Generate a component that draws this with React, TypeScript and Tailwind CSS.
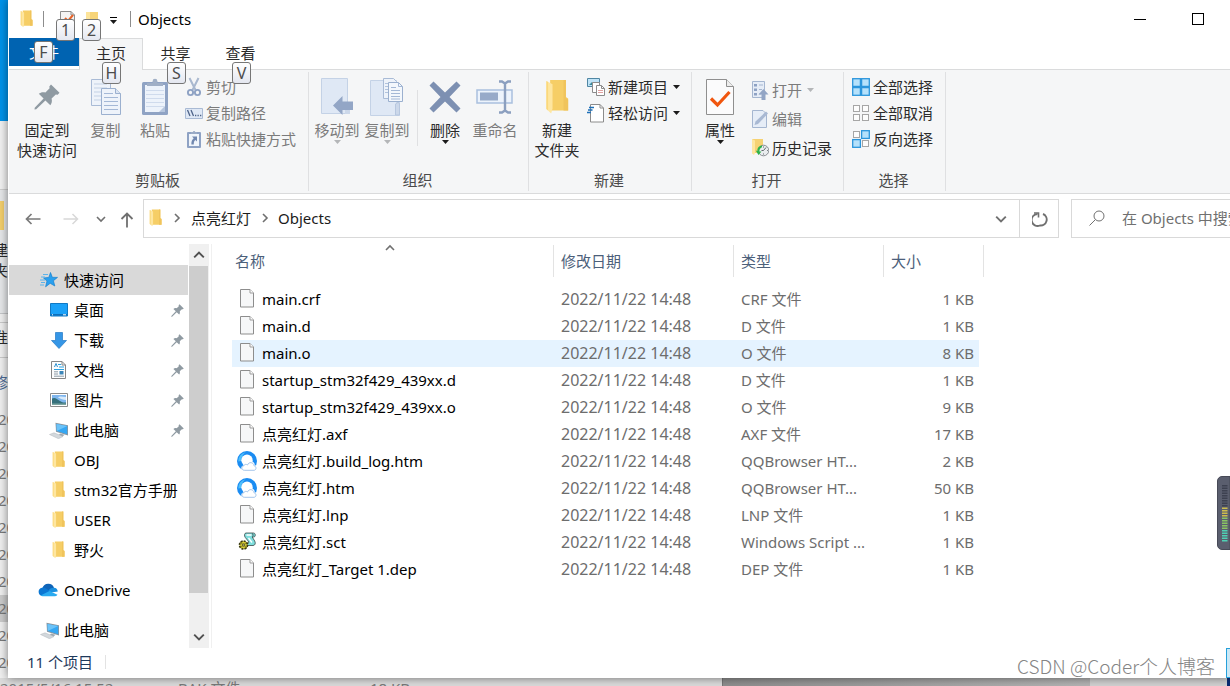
import React from "react";

type IconProps = { className?: string };

function Folder({ className = "h-[18px] w-[13px]" }: IconProps) {
  return (
    <svg viewBox="0 0 14 18" className={className} preserveAspectRatio="none" aria-hidden="true">
      <path d="M3 0.5h9.2v8.5l1.3.8v6H3z" fill="#f6ce66" />
      <path d="M10.8.5h1.4v9l1.3.8v5.5h-2.7z" fill="#f0c45c" />
      <path d="M.8 1l3.6 1.600v12.200l-.8 2.400L.8 15z" fill="#fee6a0" />
      <path d="M.8 1L0.8 15l1 .8V1.500z" fill="#fbd87c" />
    </svg>
  );
}

function FileIcon({ className = "h-[19px] w-[16px]" }: IconProps) {
  return (
    <svg viewBox="0 0 16 19" className={className} aria-hidden="true">
      <path d="M1.500.5h9.500l3.500 3.500v14h-13z" fill="#f6f7f8" stroke="#8d8d8d" />
      <path d="M11 .5v3.500h3.500" fill="#fff" stroke="#9b9b9b" />
    </svg>
  );
}

function Pin({ className = "h-[13px] w-[13px]" }: IconProps) {
  return (
    <svg viewBox="0 0 26 26" className={className} aria-hidden="true">
      <path
        d="M17 0.500l8.500 8.300-1.800 1.900-1.900-.3-4.200 4.200c.7 2.700.2 5-1.300 6.600l-4.900-4.800L2.200 25.300l-1.700.2.200-1.700 8.900-9.200-4.800-4.800c1.700-1.500 4-2 6.600-1.300l4.200-4.200-.3-1.900z"
        fill="#8f9aa2"
      />
    </svg>
  );
}

function CopyPages({ className = "h-10 w-10" }: IconProps) {
  return (
    <svg viewBox="0 0 32 38" className={className} aria-hidden="true">
      <path d="M1.500 1.500h19v26h-19z" fill="#eef3fa" stroke="#a9bbd6" />
      <path d="M4 6h13M4 10h13M4 14h8M4 18h8M4 22h8" stroke="#c3d1e5" />
      <path d="M11.500 10.500h14l5 5v21h-19z" fill="#eef3fa" stroke="#9bb0cf" />
      <path d="M25.500 10.500v5h5" fill="#dbe5f3" stroke="#9bb0cf" />
      <path d="M14 15.500h9M14 19.500h14M14 23.500h14M14 27.500h14M14 31.500h14" stroke="#a4b8d6" />
    </svg>
  );
}

function Clipboard({ className = "h-10 w-8" }: IconProps) {
  return (
    <svg viewBox="0 0 28 38" className={className} aria-hidden="true">
      <rect x="1" y="4" width="26" height="33" rx="1.500" fill="#8fa3c4" />
      <path d="M4 7h20v27H4z" fill="#edf3fb" />
      <path d="M5 12.500h18M5 16.500h18M5 20.500h18M5 24.500h18M5 28.500h18" stroke="#cfdbed" />
      <path d="M18 34l6-6v6z" fill="#b6c6de" />
      <path d="M6 8V5h5.500a2.600 2.600 0 015 0H22v3z" fill="#a0afc6" />
      <circle cx="14" cy="3.200" r="2.400" fill="#a0afc6" />
    </svg>
  );
}

function Scissors() {
  return (
    <svg viewBox="0 0 18 20" className="h-5 w-[18px]" aria-hidden="true">
      <path d="M4.500 1l6 12M13.500 1l-6 12" stroke="#a9b8cf" strokeWidth="2" fill="none" />
      <circle cx="5.500" cy="15.500" r="2.600" fill="none" stroke="#8ea2c4" strokeWidth="1.900" />
      <circle cx="12.500" cy="15.500" r="2.600" fill="none" stroke="#8ea2c4" strokeWidth="1.900" />
    </svg>
  );
}

function PathIcon() {
  return (
    <svg viewBox="0 0 18 18" className="h-[18px] w-[18px]" aria-hidden="true">
      <path d="M.5 4.500h17v10H.5z" fill="#dfe8f5" stroke="#a9bad4" />
      <path d="M2.500 6l2.500 6M6 6l2.500 6" stroke="#4f6489" strokeWidth="1.300" />
      <path d="M10 11.500h1.300M12.500 11.500h1.300M15 11.500h1.300" stroke="#4f6489" strokeWidth="1.500" />
    </svg>
  );
}

function PasteShortcut() {
  return (
    <svg viewBox="0 0 18 18" className="h-[18px] w-[18px]" aria-hidden="true">
      <rect x="2" y="2" width="14" height="16" rx="1" fill="#8ea2c4" />
      <path d="M4 4h10v12H4z" fill="#f0f5fb" />
      <path d="M6 4V2h1.800a1.300 1.300 0 012.500 0H12v2z" fill="#9aabc6" />
      <path d="M7 6.500h5v5l-1.600-1.600c-1.300 1-1.700 2.200-1.600 4.600H6.400c-.2-3 .6-4.800 2.300-6.200z" fill="#7188b0" />
    </svg>
  );
}

function MoveTo() {
  return (
    <svg viewBox="0 0 34 38" className="h-[38px] w-[34px]" aria-hidden="true">
      <path d="M1.500.5h26v24h2v11h-28z" fill="#dfe8f5" stroke="#c4d2e6" />
      <path d="M25 25h5v11h-5z" fill="#ccd8ea" />
      <path d="M13 27.500L22.500 18v5.500H33v8.500H22.500V37z" fill="#93a6c6" />
    </svg>
  );
}

function CopyTo() {
  return (
    <svg viewBox="0 0 34 40" className="h-10 w-[34px]" aria-hidden="true">
      <path d="M.5 3.500h26v22h3v13H.5z" fill="#dfe8f5" stroke="#c4d2e6" />
      <path d="M25.500 27l3-2 1 2v11h-4z" fill="#ccd8ea" stroke="#b7c7df" />
      <path d="M13.500 1.500h10l3 3v17h-13z" fill="#eef3fa" stroke="#a9bbd6" />
      <path d="M15 6.500h5M15 9.500h4M15 12.500h4M15 15.500h4" stroke="#b1c3dd" />
      <path d="M18.500 5.500h10l4 4v15h-14z" fill="#f3f7fc" stroke="#9bb0cf" />
      <path d="M28.500 5.500v4h4M21 10.500h5M21 13.500h9M21 16.500h9M21 19.500h9M21 22h9" stroke="#a4b8d6" fill="none" />
    </svg>
  );
}

function DeleteX() {
  return (
    <svg viewBox="0 0 34 34" className="h-[34px] w-[34px]" aria-hidden="true">
      <path d="M1.500 5.500l4-4L17 12.500 28.500 1.500l4 4L21.500 17l11 11.500-4 4L17 21.500 5.500 32.500l-4-4L12.500 17z" fill="#7d90b2" />
    </svg>
  );
}

function Rename() {
  return (
    <svg viewBox="0 0 38 36" className="h-9 w-[38px]" aria-hidden="true">
      <path d="M1 11h35v13H1z" fill="#ecf3fc" stroke="#a9c0de" strokeWidth="1.500" />
      <path d="M4 13.500h18v8H4z" fill="#97aac9" />
      <path d="M23 2.500h3l3 2 3-2h3M23 33.500h3l3-2 3 2h3M29 4v28" fill="none" stroke="#8b9fbf" strokeWidth="2.400" />
    </svg>
  );
}

function NewItem() {
  return (
    <svg viewBox="0 0 18 18" className="h-[18px] w-[18px]" aria-hidden="true">
      <path d="M.5.5h12v8H.5z" fill="#bfe3f7" stroke="#4f86a3" />
      <path d="M2 7l3-3 3 3z" fill="#3a8a9a" />
      <path d="M5.500 4.500h7v10h-7z" fill="#fff" stroke="#8c8c8c" />
      <path d="M9.500 7.500h5l3 3v7h-8z" fill="#fff" stroke="#8c8c8c" />
      <path d="M11 12.500h5M11 14.500h5" stroke="#e0a0a0" />
      <path d="M14.500 7.500v3h3" fill="none" stroke="#8c8c8c" />
    </svg>
  );
}

function EasyAccess() {
  return (
    <svg viewBox="0 0 18 19" className="h-[19px] w-[18px]" aria-hidden="true">
      <path d="M3.500.5h9.500l3.500 3.500v14h-13z" fill="#fff" stroke="#8c8c8c" />
      <path d="M13 .5v3.500h3.500" fill="none" stroke="#8c8c8c" />
      <path d="M2 3.500h5M1 6h4.500M0 8.500h4" stroke="#1d6fb8" strokeWidth="1.300" />
    </svg>
  );
}

function Properties() {
  return (
    <svg viewBox="0 0 30 38" className="h-[38px] w-[30px]" aria-hidden="true">
      <path d="M1.500 1.500h20l7 7v28h-27z" fill="#fbfbfc" stroke="#8f8f8f" />
      <path d="M21.500 1.500v7h7" fill="#ededed" stroke="#8f8f8f" />
      <path d="M6 20.500l6.500 6.500L24.500 14" fill="none" stroke="#f0560f" strokeWidth="3.200" />
    </svg>
  );
}

function OpenIcon() {
  return (
    <svg viewBox="0 0 18 20" className="h-5 w-[18px]" aria-hidden="true">
      <path d="M1.500 1.500h12v16h-12z" fill="#e6edf7" stroke="#a5b6d0" />
      <path d="M3 4h3v2.500H3zM3 8.500h3V11H3zM3 13h3v2.500H3z" fill="#8ea2c4" />
      <path d="M8 5h4M8 9.500h3M8 14h2" stroke="#a5b6d0" />
      <path d="M12.500 9l5 5.500h-3V20h-4v-5.500h-3z" fill="#92a5c5" />
    </svg>
  );
}

function EditIcon() {
  return (
    <svg viewBox="0 0 18 18" className="h-[18px] w-[18px]" aria-hidden="true">
      <path d="M1.500.5h10.500l3.500 3.500v13.500h-14z" fill="#e6edf7" stroke="#a5b6d0" />
      <path d="M3.500 15l1-3.500L15 1.500l2 2L7 14z" fill="#a9b9d3" />
    </svg>
  );
}

function HistoryIcon() {
  return (
    <svg viewBox="0 0 18 19" className="h-[19px] w-[18px]" aria-hidden="true">
      <path d="M1 1h11v14H1z" fill="#f6d273" />
      <path d="M1 1l3 1.500V15l-1 2-2-1.500z" fill="#fee6a0" />
      <circle cx="12.500" cy="12.500" r="5.300" fill="#e9ecee" stroke="#8a8f94" />
      <path d="M12.500 12.500l2.500-3M12.500 12.500h-2M12.500 8.500v1M12.500 15.500v1M16 12.500h.8" stroke="#5f666c" />
      <path d="M11 7.500c-3.500.5-5 3-4.500 5.500l-1.800-.4L7.500 17l3-3.500-2 .1c-.2-2 .5-3.600 2.500-4.300z" fill="#2fb34a" />
    </svg>
  );
}

function SelectTiles({ on }: { on: [boolean, boolean, boolean, boolean] }) {
  const spots = [
    [0.7, 0.7],
    [9.6, 0.7],
    [0.7, 9.6],
    [9.6, 9.6],
  ];
  return (
    <svg viewBox="0 0 18 18" className="h-[18px] w-[18px]" aria-hidden="true">
      {spots.map(([x, y], i) =>
        on[i] ? (
          <rect key={i} x={x} y={y} width="7.700" height="7.700" fill="#b5e1fb" stroke="#2b95dc" strokeWidth="1.300" />
        ) : (
          <rect key={i} x={Math.round(x) + 0.5} y={Math.round(y) + 0.5} width="6" height="6" fill="#fdfdfd" stroke="#a6a6a6" />
        )
      )}
    </svg>
  );
}

function StarIcon() {
  return (
    <svg viewBox="0 0 18 16" className="h-4 w-[18px]" aria-hidden="true">
      <path d="M10.500.5l1.800 4.800 5.200.1-4.100 3.300 1.400 5.300-4.600-2.700-4.600 3.500 1.400-5.700L3.500 6l5.300-.6z" fill="#2aa0ee" stroke="#1580cf" strokeWidth=".7" />
      <path d="M3 2.500h5M1 5h4M0 8h5M1 10.500h4M0 13h4" stroke="#5bb4ec" />
    </svg>
  );
}

function DesktopIcon() {
  return (
    <svg viewBox="0 0 18 14" className="h-3.5 w-[18px]" aria-hidden="true">
      <path d="M.5.5h17v12.500H.5z" fill="#1ba1f8" stroke="#1179c4" />
      <path d="M1 11h16v1.600H1z" fill="#0f6fba" />
      <path d="M2 11.800h1M13 11.800h3" stroke="#fff" />
    </svg>
  );
}

function DownloadIcon() {
  return (
    <svg viewBox="0 0 16 17" className="h-[17px] w-4" aria-hidden="true">
      <path d="M4.500.5h7v8h4L8 16.500.5 8.500h4z" fill="#3596e6" stroke="#2379c6" strokeWidth=".7" />
    </svg>
  );
}

function DocumentIcon() {
  return (
    <svg viewBox="0 0 15 18" className="h-[18px] w-[15px]" aria-hidden="true">
      <path d="M.5.5h10.500l3.500 3.500v13.500H.5z" fill="#fdfdfd" stroke="#868686" />
      <path d="M11 .5v3.500h3.500" fill="none" stroke="#868686" />
      <path d="M3.500 6l1.500-3.500L6.500 6" fill="none" stroke="#2c8fce" />
      <path d="M7 3.500h3M8 6h5M3 8.500h10" stroke="#2ba0e0" />
      <path d="M3 10.800h4M3 13h4M3 15.200h10" stroke="#8c9aa6" />
      <path d="M8.500 10h4v3.500h-4z" fill="#3c86b8" />
    </svg>
  );
}

function PictureIcon() {
  return (
    <svg viewBox="0 0 18 14" className="h-3.5 w-[18px]" aria-hidden="true">
      <path d="M.5.5h17v13H.5z" fill="#fff" stroke="#8c8c8c" />
      <path d="M2 2h14v10H2z" fill="#7fb6ee" />
      <path d="M2 5.500c3-1.500 5 .5 8 2.500s4 1.500 6 1.500V12H2z" fill="#35707c" />
      <path d="M2 10.500h14V12H2z" fill="#7ba4a0" />
      <path d="M8 4.500c1.500-1.500 4-1 8-.5v3c-3 0-5-1-8-2.500z" fill="#d9ebfb" />
    </svg>
  );
}

function ComputerIcon() {
  return (
    <svg viewBox="0 0 20 17" className="h-[17px] w-5" aria-hidden="true">
      <path d="M6.500.8l12.500 2.400v10.300L7 9.800z" fill="#8a969f" />
      <path d="M7.500 1.900l10.700 2v8.300L7.800 9z" fill="#35a7f3" />
      <path d="M7.500 1.900l10.700 2-10.400 5z" fill="#6cc3f8" />
      <path d="M11 11.500l4.500 1.300-1.800 1.700-4-1.200z" fill="#9fa9b1" />
      <path d="M.5 12.500l4.500-1.700 9 3.700-4.500 2.200z" fill="#d3d8dc" stroke="#b0b7bd" strokeWidth=".5" />
    </svg>
  );
}

function OneDriveIcon() {
  return (
    <svg viewBox="0 0 20 14" className="h-3.5 w-5" aria-hidden="true">
      <path d="M4.500 5.200A6 6 0 0116 4.800l-5 4z" fill="#0f64b8" />
      <path d="M4.400 13A4.200 4.200 0 014 4.700c1.500-.3 2.800.2 4 .9l6 3.600L6 13z" fill="#0b77d3" />
      <path d="M16 4.800a4.200 4.200 0 013.800 3.600L13 9.500 10.500 7.300C12 5.500 14 4.700 16 4.800z" fill="#1a90e0" />
      <path d="M2.500 12.400L11.500 7.900l8 3.800A3.600 3.600 0 0116.200 13.200H4.500a4 4 0 01-2-.8z" fill="#2aaaf0" />
    </svg>
  );
}

function BrowserIcon() {
  return (
    <svg viewBox="0 0 20 20" className="h-5 w-5" aria-hidden="true">
      <circle cx="10" cy="10" r="10" fill="#1b8cf2" />
      <path d="M1.200 10.500A9 9 0 018.500 1.300C6 3.500 4 6 4.200 10z" fill="#4fc0fb" />
      <circle cx="10" cy="9.300" r="5.700" fill="#fff" />
      <path
        d="M8 20c-4.500 0-5-5-1.200-5.800.6-1.700 2.300-2.200 3.700-1.400 1.200-3.800 7-3.200 7.300 1.200 2.700.8 2.700 5.500-.3 6z"
        fill="#fff"
      />
      <path
        d="M7.500 19.300c-3 0-3.600-3.800-.7-4.500.5-1.500 2.200-1.900 3.700-.8 1.300-3.600 6.200-2.900 6.500.8 2.600.4 2.700 4.200.1 4.500z"
        fill="#fff"
        stroke="#9cc0e8"
        strokeWidth=".9"
      />
    </svg>
  );
}

function ScriptIcon() {
  return (
    <svg viewBox="0 0 18 19" className="h-[19px] w-[18px]" aria-hidden="true">
      <path
        d="M8 1h7.500c2.300 0 2.300 4 .3 4h-1.600l2.500 4c1.300 2.300.3 4.500-1.700 4.500H8.500L11 10 7.300 5.500C5.800 3.500 6.500 1 8 1z"
        fill="#7fdedd"
        stroke="#3c4a4a"
        strokeWidth=".8"
      />
      <path d="M8.500 3h5M10.500 6l3.500 4.500" stroke="#fff" strokeWidth="1.300" />
      <path d="M14 1.500c1.500.5 1.500 2.500.2 3.300" stroke="#3c4a4a" fill="none" strokeWidth=".8" />
      <circle cx="5.500" cy="13" r="4" fill="#d8cf36" stroke="#3a3a14" strokeWidth="1.700" strokeDasharray="2 1.100" />
      <circle cx="5.500" cy="13" r="1.300" fill="#fff" stroke="#3a3a14" strokeWidth=".8" />
      <path d="M2 10l7 6M9 10l-7 6" stroke="#6f6a14" strokeWidth=".8" />
    </svg>
  );
}

function Caret({ muted = false }: { muted?: boolean }) {
  return (
    <svg viewBox="0 0 7 4" className="h-1 w-[7px]" aria-hidden="true">
      <path d="M0 0h7L3.500 4z" fill={muted ? "#b4b6b8" : "#1b1b1b"} />
    </svg>
  );
}

function Chevron({ dir = "down", className = "h-2.5 w-2.5" }: { dir?: "down" | "up" | "right"; className?: string }) {
  const d = dir === "down" ? "M1 3l4 4 4-4" : dir === "up" ? "M1 7l4-4 4 4" : "M3 1l4 4-4 4";
  return (
    <svg viewBox="0 0 10 10" className={className} aria-hidden="true">
      <path d={d} fill="none" stroke="currentColor" strokeWidth="1.600" />
    </svg>
  );
}

function KeyTip({ children, className }: { children: React.ReactNode; className: string }) {
  return (
    <kbd
      className={
        "absolute z-10 flex h-[22px] w-[19px] items-center justify-center rounded-[3px] border border-[#767676] bg-linear-to-b from-white to-[#e4e7f0] font-[inherit] text-base leading-5 text-[#4c4c4c] " +
        className
      }
    >
      {children}
    </kbd>
  );
}

function BigButton({
  icon,
  lines,
  muted = false,
  caret = false,
  className = "w-[50px]",
}: {
  icon: React.ReactNode;
  lines: string[];
  muted?: boolean;
  caret?: boolean;
  className?: string;
}) {
  return (
    <button type="button" className={"flex shrink-0 flex-col items-center pt-[7px] " + className}>
      <span className="mb-[3px] flex h-10 items-center justify-center">{icon}</span>
      {lines.map((l) => (
        <span key={l} className={"whitespace-nowrap leading-5 " + (muted ? "text-[#7b7b7b]" : "text-[#2b2b2b]")}>
          {l}
        </span>
      ))}
      {caret && <Caret muted={muted} />}
    </button>
  );
}

function SmallButton({
  icon,
  label,
  muted = false,
  caret = false,
  className = "h-[26px]",
}: {
  icon: React.ReactNode;
  label: string;
  muted?: boolean;
  caret?: boolean;
  className?: string;
}) {
  return (
    <button type="button" className={"flex items-center whitespace-nowrap " + className}>
      <span className="mr-[3px] flex w-[18px] justify-center">{icon}</span>
      <span className={"leading-5 " + (muted ? "text-[#7b7b7b]" : "text-[#2b2b2b]")}>{label}</span>
      {caret && (
        <span className="ml-[5px]">
          <Caret muted={muted} />
        </span>
      )}
    </button>
  );
}

function Group({ label, className, children }: { label: string; className: string; children: React.ReactNode }) {
  return (
    <section aria-label={label} className={"flex shrink-0 flex-col " + className}>
      <div className="flex flex-1 items-stretch">
        <div className="flex flex-1 flex-col">
          <div className="flex flex-1">{children}</div>
          <p className="pb-[3px] pr-0.5 text-center leading-5 text-[#4a4a4a]">{label}</p>
        </div>
        <div className="my-0.5 w-px bg-[#dfe0e2]" />
      </div>
    </section>
  );
}

const files = [
  { name: "main.crf", type: "CRF 文件", size: "1 KB", icon: "file" },
  { name: "main.d", type: "D 文件", size: "1 KB", icon: "file" },
  { name: "main.o", type: "O 文件", size: "8 KB", icon: "file", active: true },
  { name: "startup_stm32f429_439xx.d", type: "D 文件", size: "1 KB", icon: "file" },
  { name: "startup_stm32f429_439xx.o", type: "O 文件", size: "9 KB", icon: "file" },
  { name: "点亮红灯.axf", type: "AXF 文件", size: "17 KB", icon: "file" },
  { name: "点亮红灯.build_log.htm", type: "QQBrowser HT...", size: "2 KB", icon: "web" },
  { name: "点亮红灯.htm", type: "QQBrowser HT...", size: "50 KB", icon: "web" },
  { name: "点亮红灯.lnp", type: "LNP 文件", size: "1 KB", icon: "file" },
  { name: "点亮红灯.sct", type: "Windows Script ...", size: "1 KB", icon: "script" },
  { name: "点亮红灯_Target 1.dep", type: "DEP 文件", size: "1 KB", icon: "file" },
];

const places = [
  { name: "桌面", icon: <DesktopIcon />, pinned: true },
  { name: "下载", icon: <DownloadIcon />, pinned: true },
  { name: "文档", icon: <DocumentIcon />, pinned: true },
  { name: "图片", icon: <PictureIcon />, pinned: true },
  { name: "此电脑", icon: <ComputerIcon />, pinned: true },
  { name: "OBJ", icon: <Folder /> },
  { name: "stm32官方手册", icon: <Folder /> },
  { name: "USER", icon: <Folder /> },
  { name: "野火", icon: <Folder /> },
];

const backRows = [0, 1, 2, 3, 4, 5, 6, 7, 8, 9];

function Backdrop() {
  return (
    <div aria-hidden="true" className="absolute inset-0 overflow-hidden bg-[#f0f0f0] text-[#7a7a7a]">
      <div className="flex w-2 flex-col overflow-hidden">
        <div className="h-[121px] bg-[#0093ea]" />
        <div className="h-[69px] border-b border-[#cfcfcf] bg-[#f2f2f2]" />
        <div className="h-[124px] border-b border-[#c4c6c8] bg-[#e6e8ea] pt-[11px]">
          <div className="h-[29px] w-1 bg-[#f3cf6c]" />
          <div className="flex justify-end pt-2.5 leading-5 text-[#2b2b2b]">建</div>
          <div className="flex justify-end leading-5 text-[#2b2b2b]">夹</div>
        </div>
        <div className="mt-2 h-9 border-y border-[#c9c9c9] pt-1">
          <div className="flex justify-end leading-5 text-[#2b2b2b]">准</div>
        </div>
        <div className="flex h-[48px] items-center justify-end leading-5 text-[#4c6a94]">修</div>
        {backRows.map((r) => (
          <div key={r} className={"h-[27px] leading-[27px] " + (r === 7 ? "bg-[#cbcbcb]" : "")}>
            <span className="-ml-0.5">20</span>
          </div>
        ))}
      </div>
      <div className="absolute inset-x-0 bottom-0 flex h-2 overflow-hidden bg-[#dcdcdc] leading-[21px]">
        <div className="flex w-[723px] shrink-0 border-r border-[#777]">
          <span className="w-[178px]">2015/5/16 15:52</span>
          <span className="w-[192px]">BAK 文件</span>
          <span>18 KB</span>
        </div>
        <div className="w-[367px] bg-linear-to-r from-[#8e8e8e] to-[#b4b4b4]" />
        <div className="flex-1 bg-[#d2d2d2]" />
        <div className="w-[3px] bg-[#0a2c74]" />
      </div>
    </div>
  );
}

function LevelMeter() {
  const bars = Array.from({ length: 23 }, (_, i) => i);
  const color = (i: number) => (i < 9 ? "#3d4150" : i < 13 ? "#cdbd4c" : i < 18 ? "#8ac463" : "#4fd0b4");
  return (
    <svg viewBox="0 0 13 74" className="absolute right-0 top-[476px] h-[74px] w-[13px]" aria-hidden="true">
      <path d="M13 .5H5A4.500 4.500 0 00.5 5v64A4.500 4.500 0 005 73.500h8z" fill="#5a5e6e" stroke="#474a57" />
      {bars.map((i) => (
        <rect key={i} x="5" y={9 + i * 2.5} width="5.500" height="1.500" fill={color(i)} />
      ))}
    </svg>
  );
}

export default function App() {
  return (
    <div className="relative min-h-screen overflow-hidden bg-[#f0f0f0] pb-2 pl-2 text-[15px] leading-5 text-black [font-family:'Noto_Sans','Noto_Sans_CJK_SC',sans-serif]">
      <Backdrop />
      <main className="relative flex flex-col bg-white pl-px shadow-[0_0_9px_rgba(0,0,0,0.5)]">
        <header className="flex h-[38px] items-center pl-[11px]">
          <Folder />
          <span className="ml-2.5 h-4 w-px bg-[#8d8d8d]" />
          <button type="button" aria-label="属性" className="relative ml-4 flex h-8 w-4 items-start pt-2">
            <svg viewBox="0 0 16 19" className="h-[19px] w-4" aria-hidden="true">
              <path d="M.5.500h10.500l3.500 3.500v14H.5z" fill="#f4f4f4" stroke="#8d8d8d" />
              <path d="M11 .5v3.500h3.500" fill="none" stroke="#8d8d8d" />
              <path d="M5 7l3 3 5-6" fill="none" stroke="#e8642a" strokeWidth="2" />
            </svg>
            <KeyTip className="-left-1 top-4">1</KeyTip>
          </button>
          <button type="button" aria-label="新建文件夹" className="relative ml-2.5 flex h-8 w-3 items-start pt-[9px]">
            <svg viewBox="0 0 12 16" className="h-4 w-3" aria-hidden="true">
              <path d="M1 0h11v15H1z" fill="#f7d478" />
              <path d="M0 0h4v15H0z" fill="#fde49a" />
            </svg>
            <KeyTip className="-left-1 top-4">2</KeyTip>
          </button>
          <button type="button" aria-label="自定义快速访问工具栏" className="ml-[11px] flex w-[9px] flex-col items-center gap-0.5 pt-0.5">
            <span className="h-px w-[7px] bg-black" />
            <Caret />
          </button>
          <span className="ml-3 h-4 w-px bg-[#8d8d8d]" />
          <h1 className="ml-[7px]">Objects</h1>
          <div className="ml-auto flex pr-[3px]">
            <button type="button" aria-label="最小化" className="flex h-[38px] w-[57px] items-center justify-center">
              <span className="h-px w-3 bg-black" />
            </button>
            <button type="button" aria-label="最大化" className="flex h-[38px] w-[59px] items-center justify-center">
              <span className="h-3 w-3 border border-black" />
            </button>
          </div>
        </header>

        <div role="tablist" className="flex h-8 border-b border-[#dadbdc] text-[#2b2b2b]">
          <button type="button" role="tab" className="relative h-7 w-[70px] bg-[#0063b1] text-white">
            文件
            <KeyTip className="left-[25px] top-[3px]">F</KeyTip>
          </button>
          <button
            type="button"
            role="tab"
            aria-selected="true"
            className="relative -mb-px w-[64px] border border-b-0 border-[#dadbdc] bg-[#f5f6f7] pb-[3px]"
          >
            主页
            <KeyTip className="left-[22px] top-[23px]">H</KeyTip>
          </button>
          <button type="button" role="tab" className="relative w-[65px] pb-0.5">
            共享
            <KeyTip className="left-6 top-6">S</KeyTip>
          </button>
          <button type="button" role="tab" className="relative w-[65px] pb-0.5">
            查看
            <KeyTip className="left-6 top-6">V</KeyTip>
          </button>
        </div>

        <div className="flex h-[124px] border-b border-[#dadbdc] bg-[#f5f6f7]">
          <Group label="剪贴板" className="w-[300px]">
            <div className="flex pl-1">
              <BigButton icon={<Pin className="h-[26px] w-[26px]" />} lines={["固定到", "快速访问"]} className="w-[68px]" />
              <BigButton icon={<CopyPages className="h-[38px] w-8" />} lines={["复制"]} muted className="w-[49px]" />
              <BigButton icon={<Clipboard className="h-[38px] w-7" />} lines={["粘贴"]} muted />
            </div>
            <div className="ml-[5px] flex flex-col pt-1">
              <SmallButton icon={<Scissors />} label="剪切" muted />
              <SmallButton icon={<PathIcon />} label="复制路径" muted />
              <SmallButton icon={<PasteShortcut />} label="粘贴快捷方式" muted />
            </div>
          </Group>
          <Group label="组织" className="w-[220px]">
            <div className="flex pl-[3px]">
              <BigButton icon={<MoveTo />} lines={["移动到"]} muted caret />
              <BigButton icon={<CopyTo />} lines={["复制到"]} muted caret />
              <span className="ml-[5px] mr-0.5 mt-5 h-14 w-px bg-[#dfe0e2]" />
              <BigButton icon={<DeleteX />} lines={["删除"]} caret />
              <BigButton icon={<Rename />} lines={["重命名"]} muted />
            </div>
          </Group>
          <Group label="新建" className="w-[163px]">
            <div className="flex pl-[3px]">
              <BigButton icon={<Folder className="h-9 w-6" />} lines={["新建", "文件夹"]} />
            </div>
            <div className="ml-[5px] flex flex-col pt-1">
              <SmallButton icon={<NewItem />} label="新建项目" caret />
              <SmallButton icon={<EasyAccess />} label="轻松访问" caret />
            </div>
          </Group>
          <Group label="打开" className="w-[152px]">
            <div className="flex pl-[3px]">
              <BigButton icon={<Properties />} lines={["属性"]} caret />
            </div>
            <div className="ml-1.5 flex flex-col pt-[5px]">
              <SmallButton icon={<OpenIcon />} label="打开" muted caret className="h-[29px]" />
              <SmallButton icon={<EditIcon />} label="编辑" muted className="h-[29px]" />
              <SmallButton icon={<HistoryIcon />} label="历史记录" className="h-[29px]" />
            </div>
          </Group>
          <Group label="选择" className="w-[102px]">
            <div className="flex flex-col pl-2 pt-1">
              <SmallButton icon={<SelectTiles on={[true, true, true, true]} />} label="全部选择" />
              <SmallButton icon={<SelectTiles on={[false, false, false, false]} />} label="全部取消" />
              <SmallButton icon={<SelectTiles on={[false, true, true, false]} />} label="反向选择" />
            </div>
          </Group>
        </div>

        <div className="flex h-[50px] items-start pt-[5px] text-[#707070]">
          <div className="flex h-[39px] w-[134px] shrink-0 items-center pl-4">
            <button type="button" aria-label="后退">
              <svg viewBox="0 0 16 12" className="h-3 w-4" aria-hidden="true">
                <path d="M15.500 6H1.500M6.500 1l-5 5 5 5" fill="none" stroke="#7a7a7a" strokeWidth="1.700" />
              </svg>
            </button>
            <button type="button" aria-label="前进" className="ml-[22px]">
              <svg viewBox="0 0 16 12" className="h-3 w-4" aria-hidden="true">
                <path d="M.5 6h14M9.500 1l5 5-5 5" fill="none" stroke="#d8d8d8" strokeWidth="1.500" />
              </svg>
            </button>
            <button type="button" aria-label="最近的位置" className="ml-[17px]">
              <Chevron />
            </button>
            <button type="button" aria-label="上移" className="ml-[14px] pt-0.5">
              <svg viewBox="0 0 14 16" className="h-4 w-3.5" aria-hidden="true">
                <path d="M7 15.500V1.500M1.500 7L7 1.500 12.500 7" fill="none" stroke="#707070" strokeWidth="1.800" />
              </svg>
            </button>
          </div>
          <div className="flex h-[39px] min-w-0 flex-1 items-center border border-[#d9d9d9]">
            <nav aria-label="地址" className="flex flex-1 items-center pb-0.5 pl-[5px] text-[#1b1b1b]">
              <Folder />
              <span className="ml-2.5 text-[#707070]">
                <Chevron dir="right" />
              </span>
              <button type="button" className="ml-[9px]">
                点亮红灯
              </button>
              <span className="ml-[9px] text-[#707070]">
                <Chevron dir="right" />
              </span>
              <button type="button" className="ml-2">
                Objects
              </button>
            </nav>
            <button type="button" aria-label="以前的位置" className="flex h-full w-9 items-center justify-center">
              <Chevron className="h-3 w-3" />
            </button>
            <button type="button" aria-label="刷新" className="flex h-full w-[39px] items-center justify-center border-l border-[#d9d9d9] pl-px">
              <svg viewBox="0 0 16 16" className="h-4 w-4" aria-hidden="true">
                <path d="M5.500 3A6 6 0 108 14.500 6 6 0 0011 3" fill="none" stroke="#707070" strokeWidth="1.900" />
                <path d="M2 2h4.500v4.500" fill="none" stroke="#707070" strokeWidth="1.600" />
              </svg>
            </button>
          </div>
          <label className="ml-3 flex h-[39px] w-[159px] shrink-0 items-center overflow-hidden border border-r-0 border-[#d9d9d9] pb-0.5 pl-[17px]">
            <svg viewBox="0 0 16 16" className="mr-[17px] h-4 w-4 shrink-0" aria-hidden="true">
              <circle cx="10" cy="6" r="5" fill="none" stroke="#707070" />
              <path d="M6.400 9.600L.5 15.500" stroke="#707070" />
            </svg>
            <input
              type="text"
              aria-label="搜索"
              placeholder="在 Objects 中搜索"
              className="w-40 shrink-0 bg-transparent leading-5 outline-none placeholder:text-[#707070]"
            />
          </label>
        </div>

        <div className="flex h-[404px]">
          <nav aria-label="导航窗格" className="flex w-[180px] shrink-0 flex-col overflow-hidden pt-[21px]">
            <a href="#quick" className="flex h-[30px] w-[179px] shrink-0 items-center bg-[#d9d9d9] pl-[31px]">
              <span className="w-6">
                <StarIcon />
              </span>
              快速访问
            </a>
            {places.map((p, i) => (
              <a key={i} href="#place" className="flex h-[30px] w-[179px] shrink-0 items-center pl-[39px] pr-1">
                <span className="mr-[5px] flex w-[21px] items-center justify-center">{p.icon}</span>
                <span className="flex-1 whitespace-nowrap">{p.name}</span>
                {p.pinned && <Pin />}
              </a>
            ))}
            <a href="#onedrive" className="mt-2.5 flex h-[30px] shrink-0 items-center pl-[29px]">
              <span className="w-[26px]">
                <OneDriveIcon />
              </span>
              OneDrive
            </a>
            <a href="#pc" className="mt-2.5 flex h-[30px] shrink-0 items-center pl-[31px]">
              <span className="w-6">
                <ComputerIcon />
              </span>
              此电脑
            </a>
          </nav>
          <div aria-hidden="true" className="flex w-5 shrink-0 flex-col items-center bg-[#f0f0f0] text-[#505050]">
            <div className="flex h-[22px] items-center">
              <Chevron dir="up" className="h-3 w-3" />
            </div>
            <div className="h-[327px] w-full border-r border-[#f0f0f0] bg-[#cdcdcd]" />
            <div className="flex flex-1 items-center pt-8">
              <Chevron className="h-3 w-3" />
            </div>
          </div>
          <div className="ml-0.5 flex-1 border-l border-[#f0f0f0] pl-5 pt-px">
            <table className="w-[752px] table-fixed border-collapse text-left">
              <colgroup>
                <col className="w-[322px]" />
                <col className="w-[180px]" />
                <col className="w-[150px]" />
                <col className="w-[95px]" />
                <col className="w-[5px]" />
              </colgroup>
              <thead className="text-[#4c607a]">
                <tr className="h-[41px] align-top">
                  <th className="p-0 font-normal">
                    <button type="button" className="relative flex h-8 w-full items-center border-r border-[#e3e3e3] pl-[3px]">
                      名称
                      <span className="absolute -top-0.5 left-[153px] text-[#707070]">
                        <Chevron dir="up" />
                      </span>
                    </button>
                  </th>
                  <th className="p-0 font-normal">
                    <button type="button" className="flex h-8 w-full items-center border-r border-[#e3e3e3] pl-[7px]">
                      修改日期
                    </button>
                  </th>
                  <th className="p-0 font-normal">
                    <button type="button" className="flex h-8 w-full items-center border-r border-[#e3e3e3] pl-[7px]">
                      类型
                    </button>
                  </th>
                  <th colSpan={2} className="p-0 font-normal">
                    <button type="button" className="flex h-8 w-full items-center border-r border-[#e3e3e3] pl-[7px]">
                      大小
                    </button>
                  </th>
                </tr>
              </thead>
              <tbody className="text-[#6d6d6d]">
                {files.map((f) => {
                  const bg = f.active ? "bg-[#e5f3ff] " : "";
                  return (
                    <tr key={f.name} className="h-[27px]">
                      <td className={bg + "p-0 pb-0.5 text-black"}>
                        <span className="flex items-center whitespace-nowrap pl-[5px]">
                          <span className="mr-[5px] flex h-5 w-5 items-center justify-center">
                            {f.icon === "file" ? <FileIcon /> : f.icon === "web" ? <BrowserIcon /> : <ScriptIcon />}
                          </span>
                          {f.name}
                        </span>
                      </td>
                      <td className={bg + "whitespace-nowrap p-0 pb-0.5 pl-[7px] text-base leading-5"}>2022/11/22 14:48</td>
                      <td className={bg + "whitespace-nowrap p-0 pb-0.5 pl-[7px]"}>{f.type}</td>
                      <td className={bg + "whitespace-nowrap p-0 pb-0.5 pr-[5px] text-right"}>{f.size}</td>
                      <td className="p-0" />
                    </tr>
                  );
                })}
              </tbody>
            </table>
          </div>
        </div>

        <footer className="flex h-[30px] items-center pb-0.5 pl-[18px] text-[#1e395b]">
          11 个项目
          <span className="ml-3 h-3.5 w-px bg-[#e3e3e3]" />
        </footer>
        <span aria-hidden="true" className="absolute bottom-0 right-0 h-[30px] w-1 border border-r-0 border-[#26a0da] bg-[#cbe8f6]" />
      </main>
      <p className="absolute bottom-2 right-[15px] whitespace-nowrap text-[19px] font-light leading-6 text-[#858585] [font-family:'Noto_Sans_CJK_SC',sans-serif]">
        CSDN @Coder个人博客
      </p>
      <LevelMeter />
    </div>
  );
}
